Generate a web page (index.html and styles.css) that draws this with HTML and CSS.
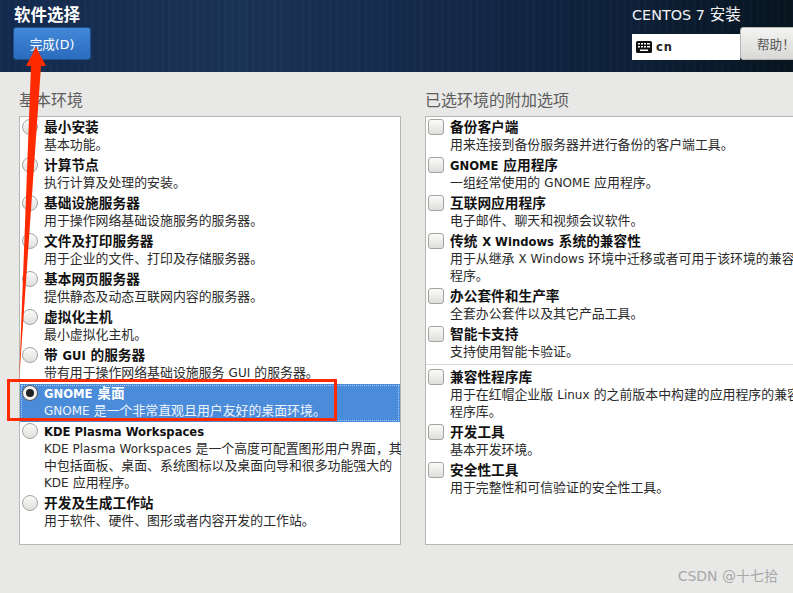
FILE: index.html
```html
<!DOCTYPE html>
<html lang="zh-CN">
<head>
<meta charset="utf-8">
<title>软件选择</title>
<link rel="stylesheet" href="styles.css">
</head>
<body>
<div class="page">
  <header class="topbar">
    <div class="top-left">
      <h1 class="spoke-title">软件选择</h1>
      <button class="done-btn">完成(D)</button>
    </div>
    <div class="top-right">
      <div class="product"><span class="product-lat">CENTOS 7</span> 安装</div>
      <div class="top-controls">
        <div class="layout-box">
          <svg class="kbd-icon" width="16" height="12" viewBox="0 0 16 12"><rect width="16" height="12" rx="1.5" fill="#111"/><g fill="#fff"><rect x="2" y="2" width="2" height="1.5"/><rect x="5" y="2" width="2" height="1.5"/><rect x="8" y="2" width="2" height="1.5"/><rect x="11" y="2" width="3" height="1.5"/><rect x="2" y="5" width="2" height="1.5"/><rect x="5" y="5" width="2" height="1.5"/><rect x="8" y="5" width="2" height="1.5"/><rect x="11" y="5" width="3" height="1.5"/><rect x="4" y="8.5" width="8" height="1.5"/></g></svg>
          <span class="layout-code">cn</span>
        </div>
        <button class="help-btn">帮助！</button>
      </div>
    </div>
  </header>

  <main class="content">
    <section class="col col-left">
      <h2 class="col-title">基本环境</h2>
      <div class="list">
        <div class="row"><span class="radio"></span><div class="text"><div class="name">最小安装</div><div class="desc">基本功能。</div></div></div>
        <div class="row"><span class="radio"></span><div class="text"><div class="name">计算节点</div><div class="desc">执行计算及处理的安装。</div></div></div>
        <div class="row"><span class="radio"></span><div class="text"><div class="name">基础设施服务器</div><div class="desc">用于操作网络基础设施服务的服务器。</div></div></div>
        <div class="row"><span class="radio"></span><div class="text"><div class="name">文件及打印服务器</div><div class="desc">用于企业的文件、打印及存储服务器。</div></div></div>
        <div class="row"><span class="radio"></span><div class="text"><div class="name">基本网页服务器</div><div class="desc">提供静态及动态互联网内容的服务器。</div></div></div>
        <div class="row"><span class="radio"></span><div class="text"><div class="name">虚拟化主机</div><div class="desc">最小虚拟化主机。</div></div></div>
        <div class="row"><span class="radio"></span><div class="text"><div class="name">带 <span class="lat">GUI</span> 的服务器</div><div class="desc">带有用于操作网络基础设施服务 <span class="lat">GUI</span> 的服务器。</div></div></div>
        <div class="row selected"><span class="radio checked"></span><div class="text"><div class="name"><span class="lat">GNOME</span> 桌面</div><div class="desc"><span class="lat">GNOME</span> 是一个非常直观且用户友好的桌面环境。</div></div></div>
        <div class="row"><span class="radio"></span><div class="text"><div class="name"><span class="lat">KDE Plasma Workspaces</span></div><div class="desc"><span class="lat">KDE Plasma Workspaces</span> 是一个高度可配置图形用户界面，其<br>中包括面板、桌面、系统图标以及桌面向导和很多功能强大的<br><span class="lat">KDE</span> 应用程序。</div></div></div>
        <div class="row"><span class="radio"></span><div class="text"><div class="name">开发及生成工作站</div><div class="desc">用于软件、硬件、图形或者内容开发的工作站。</div></div></div>
      </div>
    </section>

    <section class="col col-right">
      <h2 class="col-title">已选环境的附加选项</h2>
      <div class="list">
        <div class="row"><span class="check"></span><div class="text"><div class="name">备份客户端</div><div class="desc">用来连接到备份服务器并进行备份的客户端工具。</div></div></div>
        <div class="row"><span class="check"></span><div class="text"><div class="name"><span class="lat">GNOME</span> 应用程序</div><div class="desc">一组经常使用的 <span class="lat">GNOME</span> 应用程序。</div></div></div>
        <div class="row"><span class="check"></span><div class="text"><div class="name">互联网应用程序</div><div class="desc">电子邮件、聊天和视频会议软件。</div></div></div>
        <div class="row"><span class="check"></span><div class="text"><div class="name">传统 <span class="lat">X Windows</span> 系统的兼容性</div><div class="desc">用于从继承 <span class="lat">X Windows</span> 环境中迁移或者可用于该环境的兼容性<br>程序。</div></div></div>
        <div class="row"><span class="check"></span><div class="text"><div class="name">办公套件和生产率</div><div class="desc">全套办公套件以及其它产品工具。</div></div></div>
        <div class="row"><span class="check"></span><div class="text"><div class="name">智能卡支持</div><div class="desc">支持使用智能卡验证。</div></div></div>
        <hr class="sep">
        <div class="row"><span class="check"></span><div class="text"><div class="name">兼容性程序库</div><div class="desc">用于在红帽企业版 <span class="lat">Linux</span> 的之前版本中构建的应用程序的兼容性<br>程序库。</div></div></div>
        <div class="row"><span class="check"></span><div class="text"><div class="name">开发工具</div><div class="desc">基本开发环境。</div></div></div>
        <div class="row"><span class="check"></span><div class="text"><div class="name">安全性工具</div><div class="desc">用于完整性和可信验证的安全性工具。</div></div></div>
      </div>
    </section>
  </main>

  <div class="watermark">CSDN @十七拾</div>

  <div class="mark-box"></div>
  <svg class="mark-arrow" width="60" height="345" viewBox="0 0 60 345"><polygon points="36,0 46,19 41,19 19,335 31,19 26,19" fill="#ff2a00"/></svg>
</div>
</body>
</html>
```

FILE: styles.css
```css
* { box-sizing: border-box; }
html, body { margin: 0; padding: 0; }
body {
  font-family: "DejaVu Sans", "Noto Sans CJK SC", sans-serif;
  background: #e8e8e7;
  overflow: hidden;
}
.page {
  position: relative;
  width: 793px;
  height: 593px;
  overflow: hidden;
}
.topbar {
  height: 72px;
  display: flex;
  justify-content: space-between;
  padding: 5px 0 0 13px;
  background:
    repeating-linear-gradient(90deg, rgba(255,255,255,.012) 0 3px, rgba(0,0,0,.02) 3px 7px),
    linear-gradient(90deg, #132a4e 0%, #1a3356 30%, #14294a 55%, #0d2038 80%, #07141f 100%);
}
.spoke-title {
  margin: 0 0 0 1px;
  height: 22px;
  font-size: 16.5px;
  line-height: 21px;
  font-weight: 700;
  color: #fff;
}
.done-btn {
  display: block;
  width: 78px;
  height: 33px;
  padding: 0;
  border: 1px solid #1d4f8c;
  border-radius: 3px;
  background: linear-gradient(#4289d8, #2a6bbd);
  color: #fff;
  font-family: inherit;
  font-size: 12.6px;
}
.top-right { width: 161px; flex: none; }
.product {
  height: 22px;
  color: #f2f4f6;
  font-size: 15.5px;
  line-height: 21px;
  white-space: nowrap;
}
.product-lat { font-size: 14.4px; }
.top-controls { display: flex; align-items: flex-start; }
.layout-box {
  flex: none;
  margin-top: 7px;
  width: 108px;
  height: 26px;
  background: #fff;
  display: flex;
  align-items: center;
  gap: 4px;
  padding-left: 4px;
}
.kbd-icon { flex: none; }
.layout-code { font-size: 11.5px; font-weight: 700; letter-spacing: 1px; color: #222; }
.help-btn {
  flex: none;
  width: 60px;
  height: 33px;
  padding: 0 0 0 16px;
  text-align: left;
  border: 1px solid #b5b5b3;
  border-radius: 3px 0 0 3px;
  background: linear-gradient(#f4f4f3, #d8d8d6);
  color: #555;
  font-family: inherit;
  font-size: 12.6px;
  white-space: nowrap;
}
.content { display: flex; padding: 19px 0 0 19px; gap: 24px; }
.col-title {
  margin: 0 0 5px;
  height: 20px;
  font-size: 16px;
  line-height: 20px;
  font-weight: 400;
  color: #5d5d5d;
  white-space: nowrap;
}
.col-left { width: 382px; flex: none; }
.col-right { width: 420px; flex: none; }
.list {
  height: 429px;
  background: #fff;
  border: 1px solid #b6b6b3;
  padding-top: 1px;
}
.row {
  display: flex;
  padding: 1px 0 3px 2px;
  color: #111;
}
.text { margin-left: 6px; white-space: nowrap; }
.name {
  height: 17px;
  font-size: 13.7px;
  line-height: 17px;
  font-weight: 700;
  color: #111;
}
.name .lat { font-size: 11.6px; line-height: 0; }
.desc {
  font-size: 12.9px;
  line-height: 17px;
  color: #2a2a2a;
}
.desc .lat { font-size: 12px; line-height: 0; }
.radio, .check {
  flex: none;
  width: 16px;
  height: 16px;
  border: 1px solid #a3a3a0;
  background: linear-gradient(#fbfbfa, #dededc);
}
.radio { border-radius: 50%; }
.check { border-radius: 3px; }
.radio.checked { position: relative; background: #f1f1f0; border-color: #555; }
.radio.checked::after {
  content: "";
  position: absolute;
  left: 3px;
  top: 3px;
  width: 8px;
  height: 8px;
  border-radius: 50%;
  background: #222;
}
.row.selected {
  background: #4a8cd9;
  outline: 1px dotted #a9c8ee;
  outline-offset: -2px;
}
.row.selected .name { color: #fff; }
.row.selected .desc { color: #eef4fc; }
.sep {
  margin: 1px 0 3px 0;
  height: 1px;
  border: 0;
  background: #d9d9d7;
}
.watermark {
  position: absolute;
  right: 15px;
  bottom: 8px;
  font-size: 14px;
  line-height: 18px;
  color: #a8a8a8;
}
.mark-box {
  position: absolute;
  left: 7px;
  top: 379px;
  width: 330px;
  height: 42px;
  border: 3px solid #ff2a00;
}
.mark-arrow {
  position: absolute;
  left: 0;
  top: 47px;
}
```
